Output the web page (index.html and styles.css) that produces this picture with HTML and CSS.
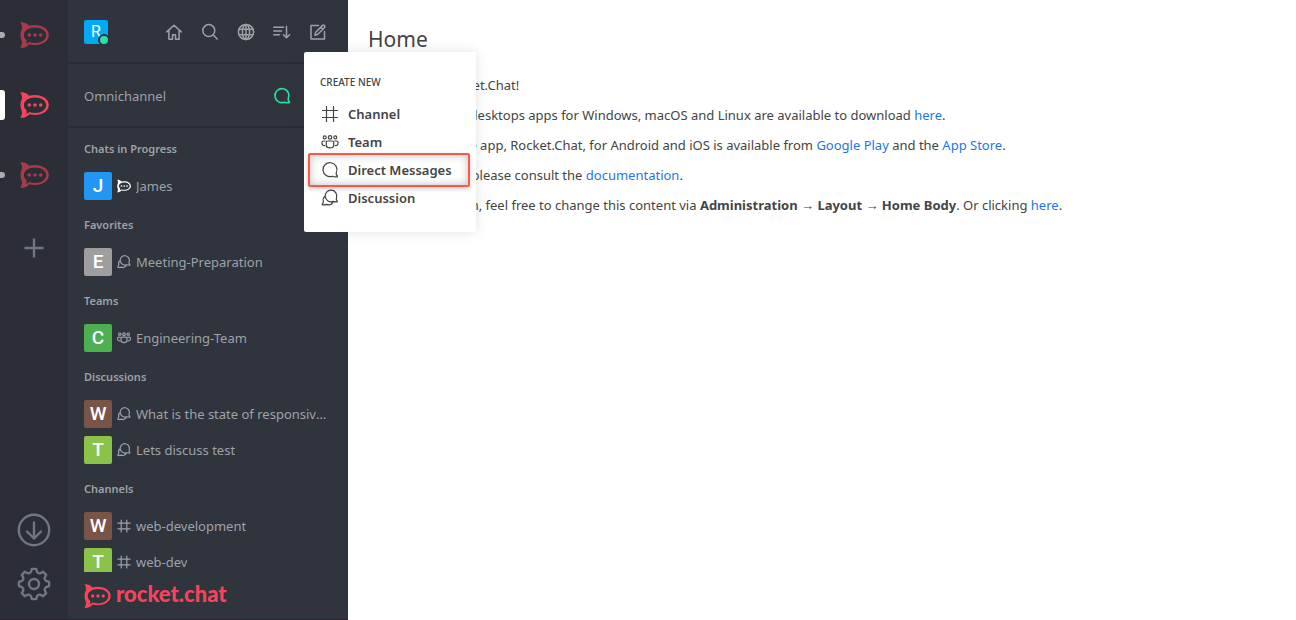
FILE: index.html
```html
<!DOCTYPE html>
<html lang="en">
<head>
<meta charset="utf-8">
<title>Rocket.Chat</title>
<link rel="stylesheet" href="styles.css">
</head>
<body>
<svg class="sprite" aria-hidden="true">
  <symbol id="rocket" viewBox="0 0 29 26">
    <path fill="currentColor" fill-rule="evenodd" d="M.2.3C3.800-.1 7 1.200 9.200 3.800 10.900 3.300 12.900 3 15 3c7.700 0 13.800 4.200 13.800 10S22.700 23 15 23c-2 0-4-.3-5.700-.8C7.100 24.800 3.800 26.200.2 25.800 1.800 23.800 2.300 21.400 1.800 19 .900 17.200.500 15.100.500 13S.900 8.800 1.900 7C2.200 4.800 1.800 2.200.2.300zM15.100 5.500C8.900 5.500 3.900 8.500 3.900 13c0 1.900.9 3.700 2.500 5 .4 1.300.3 2.600-.3 3.800 1 0 2.100-.8 2.900-1.700 1.800.6 3.900.9 6.100.9 6.200 0 11.100-3.500 11.100-8S21.300 5.500 15.100 5.500z"/>
    <circle cx="9.300" cy="13" r="1.800" fill="currentColor"/><circle cx="15" cy="13" r="1.800" fill="currentColor"/><circle cx="20.700" cy="13" r="1.800" fill="currentColor"/>
  </symbol>
  <symbol id="hash" viewBox="0 0 20 20"><path d="M6.500 2.500v15M13.500 2.500v15M2.500 6.500h15M2.500 13.500h15"/></symbol>
  <symbol id="balloon" viewBox="0 0 20 20"><path d="M16.300 12.600A7 7 0 1 0 12.400 16.200c.8.500 2.300.7 4.500.6.700 0 .8-.7.300-1.100-.9-.8-1.200-1.900-.9-3.100z"/></symbol>
  <symbol id="discussion" viewBox="0 0 20 20"><path d="M16.500 9.800A5.800 5.800 0 1 0 13 13.400c.8.400 2 .6 3.800.5.600 0 .7-.7.300-1-.8-.8-1-1.900-.6-3.100zM5.200 8A4.900 4.900 0 0 0 3.400 13.200c.2.900-.3 1.900-1 2.500-.5.500-.3 1.100.4 1.200 1.500.1 2.700-.1 3.600-.5 2.900 1.100 5.500.1 6.600-2.600"/></symbol>
  <symbol id="team" viewBox="0 0 20 20"><circle cx="4.700" cy="5.400" r="1.500"/><circle cx="10" cy="5.400" r="1.700"/><circle cx="15.300" cy="5.400" r="1.500"/><path d="M6.300 10.500c0-1 .6-1.500 1.400-1.500h4.600c.8 0 1.400.5 1.400 1.500v2.700c0 1.600-1.500 2.600-3.700 2.600s-3.700-1-3.700-2.600zM5.200 9H3.400c-.9 0-1.400.5-1.400 1.300v1.400c0 1.100 1 1.900 2.700 2M14.800 9h1.800c.9 0 1.400.5 1.400 1.300v1.400c0 1.100-1 1.900-2.700 2"/></symbol>
</svg>
<div class="app">
  <nav class="rail" aria-label="Workspaces">
    <button class="server unread" aria-label="Workspace 1"><svg><use href="#rocket"/></svg></button>
    <button class="server active" aria-label="Workspace 2"><svg><use href="#rocket"/></svg></button>
    <button class="server unread" aria-label="Workspace 3"><svg><use href="#rocket"/></svg></button>
    <button class="add" aria-label="Add workspace"><svg viewBox="0 0 20 20"><path d="M10 .5v19M.5 10h19"/></svg></button>
    <div class="rail-tools">
      <button aria-label="Downloads"><svg viewBox="0 0 34 34"><circle cx="17" cy="17" r="15.200"/><path d="M17 9.500v16M10 18.500l7 7 7-7"/></svg></button>
      <button aria-label="Settings"><svg viewBox="-17 -17 34 34"><circle r="5"/><path d="M-2.100-15.100H2.100L3.100-12Q4.400-10.400 6.300-10.700L9.200-12.200 12.200-9.200 10.700-6.300Q10.400-4.400 12-3.100L15.100-2.100V2.100L12 3.100Q10.400 4.400 10.700 6.300L12.200 9.200 9.200 12.200 6.300 10.700Q4.400 10.400 3.100 12L2.100 15.100H-2.100L-3.100 12Q-4.400 10.400-6.300 10.700L-9.200 12.200-12.200 9.200-10.700 6.300Q-10.400 4.400-12 3.100L-15.100 2.100V-2.100L-12-3.100Q-10.400-4.400-10.700-6.300L-12.200-9.200-9.200-12.200-6.300-10.700Q-4.400-10.400-3.100-12Z"/></svg></button>
    </div>
  </nav>
  <aside class="sidebar">
    <header class="toolbar">
      <button class="me" aria-label="My account">R<span class="status"></span></button>
      <div class="actions">
        <button aria-label="Home"><svg viewBox="0 0 20 20"><path d="M2.700 9.900 10 3.200l7.300 6.700M4.900 8v9.200h3.600v-4.400h3v4.400h3.600V8"/></svg></button>
        <button aria-label="Search"><svg viewBox="0 0 20 20"><circle cx="8.800" cy="8.600" r="6"/><path d="m13.200 13 4 4"/></svg></button>
        <button aria-label="Directory"><svg viewBox="0 0 20 20"><circle cx="10" cy="10" r="7.600"/><ellipse cx="10" cy="10" rx="3.600" ry="7.600"/><path d="M10 2.400v15.200M3 7.200h14M3 12.800h14"/></svg></button>
        <button aria-label="Sort"><svg viewBox="0 0 20 20"><path d="M1.800 5.200h9.700M1.800 9h7.700M1.800 12.800h5.700M14.500 4.200v11.500M11.500 12.800l3 3 3-3"/></svg></button>
        <div class="create">
          <button aria-label="Create new" aria-expanded="true"><svg viewBox="0 0 20 20"><path d="M10.500 3.500h-7.500v13.500h13.500V9.500M7 13.200l.7-3 6.600-6.600c.6-.6 1.500-.6 2.100 0s.6 1.500 0 2.100L9.900 12.300zM12.700 5.200l2.100 2.100"/></svg></button>
          <div class="menu">
            <h2>CREATE NEW</h2>
            <button><svg><use href="#hash"/></svg>Channel</button>
            <button><svg><use href="#team"/></svg>Team</button>
            <button class="marked"><svg><use href="#balloon"/></svg>Direct Messages</button>
            <button><svg><use href="#discussion"/></svg>Discussion</button>
          </div>
        </div>
      </div>
    </header>
    <div class="omni"><span>Omnichannel</span><button aria-label="Available"><svg><use href="#balloon"/></svg></button></div>
    <div class="rooms">
      <h3>Chats in Progress</h3>
      <a href="#"><span class="avatar blue">J</span><svg class="live"><use href="#rocket"/></svg><span class="name">James</span></a>
      <h3>Favorites</h3>
      <a href="#"><span class="avatar gray">E</span><svg><use href="#discussion"/></svg><span class="name">Meeting-Preparation</span></a>
      <h3>Teams</h3>
      <a href="#"><span class="avatar green">C</span><svg><use href="#team"/></svg><span class="name">Engineering-Team</span></a>
      <h3>Discussions</h3>
      <a href="#"><span class="avatar brown">W</span><svg><use href="#discussion"/></svg><span class="name">What is the state of responsive design</span></a>
      <a href="#"><span class="avatar lime">T</span><svg><use href="#discussion"/></svg><span class="name">Lets discuss test</span></a>
      <h3>Channels</h3>
      <a href="#"><span class="avatar brown">W</span><svg><use href="#hash"/></svg><span class="name">web-development</span></a>
      <a href="#"><span class="avatar lime">T</span><svg><use href="#hash"/></svg><span class="name">web-dev</span></a>
    </div>
    <footer class="brand"><svg><use href="#rocket"/></svg><span>rocket.chat</span></footer>
  </aside>
  <main class="content">
    <h1>Home</h1>
    <p>Welcome to Rocket.Chat!</p>
    <p>The Rocket.Chat desktops apps for Windows, macOS and Linux are available to download <a href="#">here</a>.</p>
    <p>The native mobile app, Rocket.Chat, for Android and iOS is available from <a href="#">Google Play</a> and the <a href="#">App Store</a>.</p>
    <p>For further help, please consult the <a href="#">documentation</a>.</p>
    <p>If you're an admin, feel free to change this content via <b>Administration</b> → <b>Layout</b> → <b>Home Body</b>. Or clicking <a href="#">here</a>.</p>
  </main>
</div>
</body>
</html>
```
FILE: styles.css
```css
* { box-sizing: border-box; }
body { margin: 0; font-family: "Noto Sans", "Open Sans", sans-serif; font-size: 13px; line-height: 20px; color: #444; background: #fff; }
h1, h2, h3, p { margin: 0; }
button { margin: 0; padding: 0; border: 0; background: none; color: inherit; font: inherit; display: flex; align-items: center; }
a { text-decoration: none; color: #1d74f5; }
svg { flex: none; fill: none; stroke: currentColor; stroke-width: 1.2; stroke-linecap: round; stroke-linejoin: round; }
#rocket { stroke: none; }
.sprite { display: none; }

.app { display: flex; height: 100vh; }

.rail { width: 68px; flex: none; display: flex; flex-direction: column; border-bottom: 1px solid #2a2433; background: #2b2e36; color: #72767f; }
.rail button { justify-content: center; }
.server { position: relative; height: 70px; color: #a83b4b; }
.server svg { width: 29px; height: 26px; }
.server::before { content: ""; position: absolute; left: 0; top: 32px; width: 5px; height: 6px; border-radius: 0 3px 3px 0; background: #aaacaf; }
.server.active { color: #f5455c; }
.server.active::before { top: 20px; height: 30px; background: #fff; }
.add { height: 76px; }
.add svg { width: 20px; height: 20px; stroke-width: 2.4; stroke-linecap: butt; }
.rail-tools { margin-top: auto; padding-bottom: 18px; display: flex; flex-direction: column; gap: 20px; }
.rail-tools svg { width: 34px; height: 34px; stroke-width: 2.4; }

.sidebar { width: 280px; flex: none; display: flex; flex-direction: column; border-bottom: 1px solid #2a2433; background: #2f343d; color: #9ea2a8; }
.toolbar { height: 64px; flex: none; padding: 2px 20px 0 16px; display: flex; justify-content: space-between; align-items: center; border-bottom: 2px solid #282c35; }
.me { position: relative; width: 24px; height: 24px; justify-content: center; border-radius: 2px; background: #03a9f4; color: #fff; font-family: Roboto, sans-serif; font-size: 16px; }
.status { position: absolute; right: -2px; bottom: -2px; width: 12px; height: 12px; border: 2px solid #2f343d; border-radius: 50%; background: #2de0a5; }
.actions { display: flex; gap: 16px; }
.actions svg { width: 20px; height: 20px; stroke-width: 1.5; }
.create { position: relative; }
.menu { position: absolute; z-index: 2; left: -4px; top: 30px; width: 172px; padding: 20px 16px; border-radius: 2px; background: #fff; color: #444; box-shadow: 0 0 12px rgba(47, 52, 61, .15); }
.menu h2 { padding-bottom: 8px; font-size: 10px; font-weight: 500; line-height: 20px; }
.menu button { position: relative; height: 28px; gap: 8px; font-weight: 600; white-space: nowrap; }
.menu button svg { stroke-width: 1.2; }
.menu .marked::after { content: ""; position: absolute; inset: -3px -18px -3px -12px; border: 2px solid #f55a4b; border-radius: 2px; box-shadow: inset 0 0 8px rgba(0, 0, 0, .25), 0 2px 4px rgba(0, 0, 0, .2); }

.omni { height: 64px; flex: none; padding: 2px 56px 0 16px; display: flex; justify-content: space-between; align-items: center; border-bottom: 2px solid #282c35; }
.omni svg { width: 20px; height: 20px; color: #2de0a5; stroke-width: 1.6; }

.rooms { flex: 1; min-height: 0; overflow: hidden; }
.rooms h3 { padding: 2px 16px 0; font-size: 11px; font-weight: 600; line-height: 38px; }
.rooms a { height: 36px; padding: 0 16px; display: flex; align-items: center; gap: 4px; color: #9ea2a8; }
.rooms svg { width: 16px; height: 16px; stroke-width: 1.5; }
.rooms .live { width: 14px; margin: 0 1px; color: #fff; }
.name { overflow: hidden; text-overflow: ellipsis; white-space: nowrap; }
.avatar { width: 28px; height: 28px; flex: none; border-radius: 2px; color: #fff; font-family: Roboto, sans-serif; font-size: 19px; font-weight: 500; line-height: 28px; text-align: center; }
.blue { background: #2196f3; }
.gray { background: #9e9e9e; }
.green { background: #4caf50; }
.brown { background: #795548; }
.lime { background: #8bc34a; }

.brand { height: 47px; flex: none; padding: 0 16px; display: flex; align-items: center; gap: 5px; color: #f5455c; font-family: Lato, sans-serif; font-size: 22px; font-weight: 900; line-height: 24px; }
.brand svg { width: 27px; height: 24px; }
.brand span { padding-bottom: 4px; }

.content { flex: 1; min-width: 0; padding: 24px 20px; }
.content h1 { padding-bottom: 16px; font-size: 21px; font-weight: 400; line-height: 30px; }
.content p { line-height: 30px; white-space: nowrap; }
```
